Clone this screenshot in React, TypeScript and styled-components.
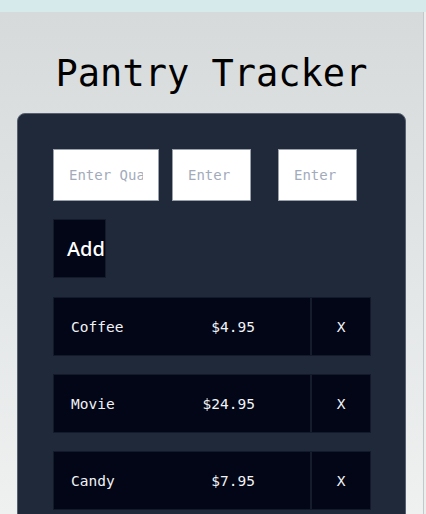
import React from 'react';
import { styled, createGlobalStyle } from 'styled-components';

interface Item {
  name: string;
  price: string;
}

const ITEMS: Item[] = [
  { name: 'Coffee', price: '$4.95' },
  { name: 'Movie', price: '$24.95' },
  { name: 'Candy', price: '$7.95' },
];

const GlobalStyle = createGlobalStyle`
  html, body {
    margin: 0;
    padding: 0;
    background: #eceeee;
    overflow: hidden;
  }
`;

const App = () => {
  return (
    <>
      <GlobalStyle />
      <TopStrip />
      <PageStyle>
        <TitleStyle>Pantry Tracker</TitleStyle>
        <CardStyle>
          <FormRow>
            <InputStyle type="text" placeholder="Enter Quantity" $width={106} $ml={0} />
            <InputStyle type="text" placeholder="Enter Name" $width={79} $ml={13} />
            <InputStyle type="text" placeholder="Enter Price" $width={79} $ml={27} />
          </FormRow>
          <AddButton>Add</AddButton>
          <ListStyle>
            {ITEMS.map((item) => (
              <RowStyle key={item.name}>
                <NameCell>{item.name}</NameCell>
                <PriceCell>{item.price}</PriceCell>
                <DeleteCell>X</DeleteCell>
              </RowStyle>
            ))}
          </ListStyle>
        </CardStyle>
      </PageStyle>
    </>
  );
};

export default App;

const TopStrip = styled.div`
  height: 12px;
  background-color: #d6e9eb;
`;

const PageStyle = styled.main`
  width: 424px;
  height: 502px;
  padding: 0 0 0 17px;
  box-sizing: border-box;
  border-right: 1px solid #c3c9ca;
  background: linear-gradient(180deg, #d6dadb 0%, #eff1f1 100%);
  overflow: hidden;
`;

const TitleStyle = styled.h1`
  margin: 0;
  padding-top: 40px;
  width: 389px;
  height: 101px;
  box-sizing: border-box;
  text-align: center;
  font-family: 'DejaVu Sans Mono', monospace;
  font-weight: 400;
  font-size: 37px;
  line-height: 44px;
  color: #000;
`;

const CardStyle = styled.section`
  width: 389px;
  min-height: 420px;
  box-sizing: border-box;
  padding: 35px 0 0 35px;
  background-color: #1f293a;
  border: 1px solid #566070;
  border-radius: 8px;
`;

const FormRow = styled.div`
  display: flex;
`;

const InputStyle = styled.input<{ $width: number; $ml: number }>`
  width: ${({ $width }) => $width}px;
  height: 52px;
  margin-left: ${({ $ml }) => $ml}px;
  box-sizing: border-box;
  padding: 0 15px;
  border: 1px solid #9aa1aa;
  background-color: #fff;
  font-family: 'DejaVu Sans Mono', monospace;
  font-size: 14px;
  outline: none;

  &::placeholder {
    color: #a3abbb;
  }
`;

const AddButton = styled.button`
  display: block;
  margin-top: 18px;
  width: 53px;
  height: 59px;
  padding: 0 0 0 13px;
  text-align: left;
  background-color: #020617;
  border: 1px solid #141c2b;
  color: #fff;
  font-family: 'Noto Sans', sans-serif;
  font-weight: 500;
  font-size: 20px;
  white-space: nowrap;
  overflow: hidden;
`;

const ListStyle = styled.ul`
  list-style: none;
  margin: 19px 0 0;
  padding: 0;
  display: flex;
  flex-direction: column;
  gap: 18px;
`;

const RowStyle = styled.li`
  display: flex;
  width: 318px;
  height: 59px;
  box-sizing: border-box;
  background-color: #020617;
  border: 1px solid #131b2a;
  font-family: 'DejaVu Sans Mono', monospace;
  font-size: 14.5px;
  color: #f1f3f6;
`;

const NameCell = styled.span`
  flex: 1;
  display: flex;
  align-items: center;
  padding-left: 17px;
`;

const PriceCell = styled.span`
  display: flex;
  align-items: center;
  padding-right: 55px;
`;

const DeleteCell = styled.span`
  width: 60px;
  display: flex;
  align-items: center;
  justify-content: center;
  border-left: 2px solid #151d2c;
  box-sizing: border-box;
`;
